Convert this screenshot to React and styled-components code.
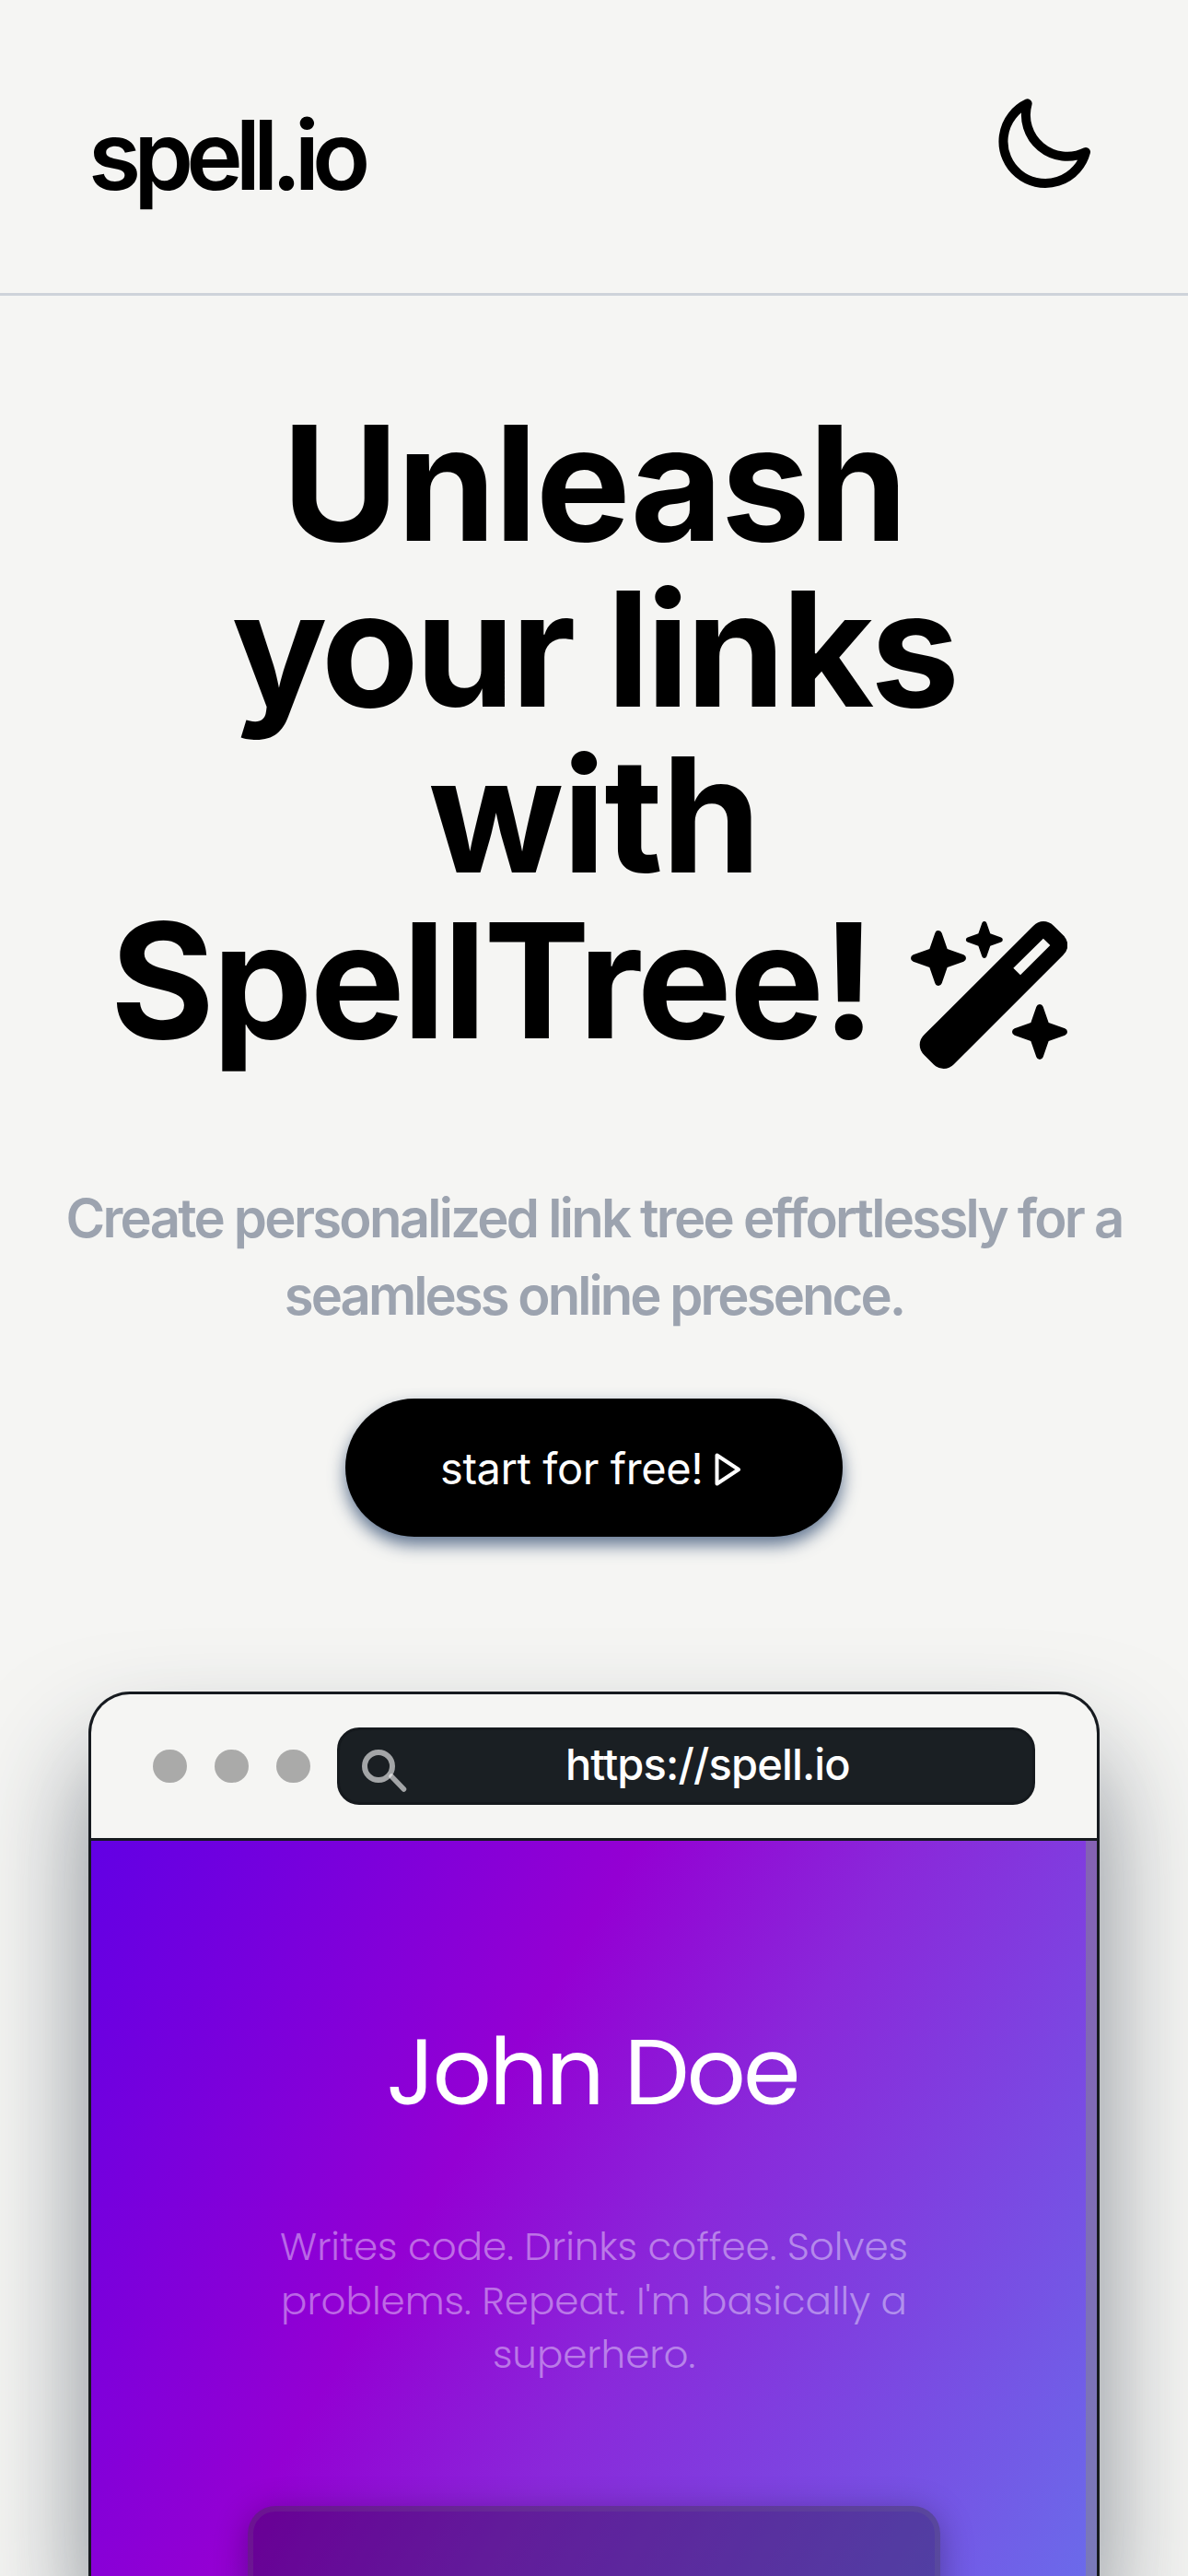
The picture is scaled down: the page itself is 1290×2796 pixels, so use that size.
import React from 'react';
import styled, { createGlobalStyle } from 'styled-components';

const GlobalStyle = createGlobalStyle`
  *, *::before, *::after { box-sizing: border-box; }
  body {
    margin: 0;
    background: #f5f5f3;
    color: #000;
    font-family: Inter, "Liberation Sans", sans-serif;
  }
`;

const Page = styled.div`
  display: flex;
  flex-direction: column;
  height: 100vh;
  overflow: hidden;
  background: #f5f5f3;
`;

const Header = styled.header`
  display: flex;
  flex: none;
  justify-content: space-between;
  align-items: flex-start;
  height: 321px;
  padding: 107px 106px 0 96px;
  border-bottom: 3px solid #ced3da;
`;

const Logo = styled.a`
  margin-top: 7px;
  font-size: 104px;
  font-weight: 600;
  line-height: 108px;
  letter-spacing: -7.91px;
`;

const ThemeToggle = styled.button`
  display: flex;
  padding: 0;
  border: 0;
  background: none;
  color: inherit;
`;

const Hero = styled.main`
  display: flex;
  flex: 1;
  flex-direction: column;
  align-items: center;
  padding: 113px 96px 0;
`;

const Heading = styled.h1`
  display: flex;
  flex: none;
  flex-direction: column;
  align-items: center;
  margin: 0;
  font-size: 173px;
  font-weight: 700;
  line-height: 180px;
  white-space: nowrap;
`;

const Line = styled.span`
  display: block;
  letter-spacing: ${({ $tracking }) => $tracking}px;
`;

const WandLine = styled.span`
  display: flex;
  align-items: flex-start;
  gap: 41px;
  height: 180px;
  padding-right: 11px;

  svg { margin-top: 26px; }
`;

const Subtitle = styled.p`
  flex: none;
  margin: 126px 0 0;
  color: #9ca3af;
  font-size: 58px;
  font-weight: 600;
  line-height: 84px;
  text-align: center;
  white-space: nowrap;
`;

const StartButton = styled.button`
  display: flex;
  flex: none;
  align-items: center;
  gap: 13px;
  width: 540px;
  height: 150px;
  margin-top: 70px;
  padding: 2px 0 0 103px;
  border: 0;
  border-radius: 75px;
  background: #000;
  box-shadow: 0 9px 18px rgba(60, 85, 120, 0.8);
  color: #fff;
  font: 400 47px/60px Inter, "Liberation Sans", sans-serif;
  letter-spacing: -0.42px;
  white-space: nowrap;

  svg { flex: none; margin-top: 1px; }
`;

const Browser = styled.section`
  display: flex;
  flex: 1;
  flex-direction: column;
  width: 1098px;
  margin-top: 168px;
  border: 3px solid #161a1f;
  border-bottom: 0;
  border-radius: 45px 45px 0 0;
  background: #f5f5f3;
  box-shadow: 0 72px 118px rgba(38, 50, 65, 0.55);
`;

const Toolbar = styled.div`
  display: flex;
  flex: none;
  align-items: center;
  height: 159px;
  padding-left: 67px;
  border-bottom: 3px solid #161a1f;
`;

const Dots = styled.div`
  display: flex;
  gap: 30.7px;
`;

const Dot = styled.span`
  width: 36.5px;
  height: 36.5px;
  border-radius: 50%;
  background: #aaaaa9;
`;

const AddressBar = styled.div`
  display: flex;
  align-items: center;
  width: 758px;
  height: 84px;
  margin-left: 29px;
  padding-left: 24px;
  border: 3px solid #15191d;
  border-radius: 24px;
  background: #1a1f23;
  color: #fff;

  svg { flex: none; margin-top: 10px; }
`;

const Address = styled.span`
  margin: -4px 0 0 172px;
  font-size: 47px;
  font-weight: 500;
  line-height: 60px;
  letter-spacing: -0.84px;
`;

const Viewport = styled.div`
  position: relative;
  display: flex;
  flex: 1 1 0;
  flex-direction: column;
  align-items: center;
  min-height: 0;
  padding-top: 191px;
  overflow: hidden;
  background: linear-gradient(
    120deg,
    #6200e4 0,
    #9400d3 515px,
    #8a28da 770px,
    #6b6aea 1334px
  );
  color: #fff;
  font-family: Poppins, Inter, "Liberation Sans", sans-serif;
`;

const ScrollTrack = styled.div`
  position: absolute;
  top: 0;
  right: 0;
  bottom: 0;
  width: 12px;
  background: rgba(136, 136, 136, 0.5);
`;

const Name = styled.h2`
  flex: none;
  margin: 0;
  padding-right: 4px;
  font-size: 100px;
  font-weight: 400;
  line-height: 120px;
  letter-spacing: -2.67px;
`;

const Bio = styled.p`
  flex: none;
  margin: 101px 0 0;
  color: rgba(255, 255, 255, 0.42);
  font-size: 42px;
  font-weight: 300;
  line-height: 58.5px;
  text-align: center;
  white-space: nowrap;
`;

const LinkCard = styled.a`
  flex: none;
  width: 752px;
  height: 180px;
  margin-top: 134px;
  padding-top: 57px;
  border: 6px solid rgba(128, 128, 128, 0.15);
  border-radius: 30px;
  background: rgba(0, 0, 0, 0.29);
  box-shadow: 0 6px 36px rgba(0, 0, 0, 0.3);
  font-size: 48px;
  font-weight: 500;
  line-height: 72px;
  text-align: center;
`;

const MoonIcon = () => (
  <svg width="100" height="98" viewBox="252 141 300 294" fill="none" stroke="currentColor" strokeWidth="30" strokeLinejoin="round">
    <path d="M347 157A136.5 136.5 0 1 0 537 315A135 135 0 0 1 347 157Z" />
  </svg>
);

const STAR =
  'M-11-82Q-8-90 0-90T11-82L29-30L82-11Q90-8 90 0T82 11L29 30L11 82Q8 90 0 90T-11 82L-29 30L-82 11Q-90 8-90 0T-82-11L-29-30Z';

const WandIcon = () => (
  <svg width="170" height="160" viewBox="86 90 510 480" fill="currentColor">
    <path d={STAR} transform="translate(176 210)" />
    <path d={STAR} transform="translate(325.500 150) scale(.667)" />
    <path d={STAR} transform="translate(506 450)" />
    <path
      fillRule="evenodd"
      d="M485 105Q500 90 518 90T551 104L583 136Q597 150 597 168T582 200L227 555Q212 570 193 570T160 556L130 526Q115 511 115 492T132 457ZM517.500 146L420 242L443 265L540 168Z"
    />
  </svg>
);

const PlayIcon = () => (
  <svg width="29" height="36" viewBox="0 0 29 36" fill="none" stroke="currentColor" strokeWidth="4" strokeLinejoin="round">
    <path d="M2.500 2.500V33.500L26 18Z" />
  </svg>
);

const SearchIcon = () => (
  <svg width="49" height="46" viewBox="0 0 49 46" fill="none" stroke="#fff" strokeOpacity="0.6">
    <circle cx="18" cy="18" r="15" strokeWidth="6" />
    <path d="M32 29L45.500 43" strokeWidth="5.500" strokeLinecap="round" />
  </svg>
);

const headingLines = [
  { text: 'Unleash', tracking: -1.93 },
  { text: 'your links', tracking: -3.81 },
  { text: 'with', tracking: -1.51 },
];

const subtitleLines = [
  { text: 'Create personalized link tree effortlessly for a', tracking: -2.72 },
  { text: 'seamless online presence.', tracking: -2.94 },
];

const bioLines = [
  { text: 'Writes code. Drinks coffee. Solves', tracking: 0 },
  { text: "problems. Repeat. I'm basically a", tracking: 0 },
  { text: 'superhero.', tracking: 0 },
];

const Lines = ({ items }) =>
  items.map(({ text, tracking }) => (
    <Line key={text} $tracking={tracking}>
      {text}
    </Line>
  ));

export default function App() {
  return (
    <>
      <GlobalStyle />
      <Page>
        <Header>
          <Logo>spell.io</Logo>
          <ThemeToggle aria-label="Toggle theme">
            <MoonIcon />
          </ThemeToggle>
        </Header>
        <Hero>
          <Heading>
            <Lines items={headingLines} />
            <WandLine>
              <Line $tracking={-2.73}>SpellTree!</Line>
              <WandIcon />
            </WandLine>
          </Heading>
          <Subtitle>
            <Lines items={subtitleLines} />
          </Subtitle>
          <StartButton>
            start for free!
            <PlayIcon />
          </StartButton>
          <Browser>
            <Toolbar>
              <Dots>
                <Dot />
                <Dot />
                <Dot />
              </Dots>
              <AddressBar>
                <SearchIcon />
                <Address>https://spell.io</Address>
              </AddressBar>
            </Toolbar>
            <Viewport>
              <Name>John Doe</Name>
              <Bio>
                <Lines items={bioLines} />
              </Bio>
              <LinkCard>Portfolio</LinkCard>
              <ScrollTrack />
            </Viewport>
          </Browser>
        </Hero>
      </Page>
    </>
  );
}
